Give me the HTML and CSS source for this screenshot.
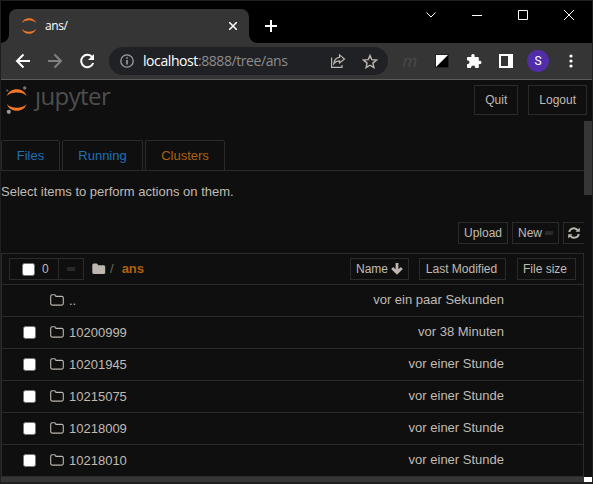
FILE: index.html
```html
<!DOCTYPE html>
<html lang="de">
<head>
<meta charset="utf-8">
<title>ans/</title>
<link rel="stylesheet" href="styles.css">
</head>
<body>
<svg width="0" height="0" class="defs">
  <symbol id="folder" viewBox="0 0 14 12"><path d="M.7 2.200Q.7.700 2.200.700h2.300Q5.700.700 5.900 2.400h5.900q1.500 0 1.500 1.500v5.700q0 1.500-1.500 1.500H2.200Q.7 11.100.700 9.600z" fill="none" stroke="#bdb7af" stroke-width="1.1"/></symbol>
</svg>
<div class="window">
  <div class="tabstrip">
    <div class="tab">
      <svg class="favicon" width="16" height="16" viewBox="0 0 16 16" fill="#f37726"><path d="M.8 5.200C2 2 4.700.2 8 .2s6 1.800 7.200 5C13.500 3.200 11 2.200 8 2.200S2.500 3.200.8 5.200zM.8 10.800C2 14 4.700 15.800 8 15.800s6-1.800 7.200-5C13.500 12.800 11 13.800 8 13.800S2.500 12.800.8 10.800z"/></svg>
      <span class="tab-title">ans/</span>
      <svg width="8" height="8" viewBox="0 0 8 8" stroke="#fff" stroke-width="1.5"><path d="M0 0l8 8M8 0L0 8"/></svg>
    </div>
    <svg class="plus" width="12" height="12" viewBox="0 0 12 12" stroke="#fff" stroke-width="2"><path d="M6 0v12M0 6h12"/></svg>
    <div class="controls">
      <svg width="12" height="12" viewBox="0 0 12 12"><path d="M1.500 3.500l4.500 4.500 4.500-4.500"/></svg>
      <svg width="12" height="12" viewBox="0 0 12 12"><path d="M1 6.500h10"/></svg>
      <svg width="12" height="12" viewBox="0 0 12 12"><path d="M1.500 1.500h9v9h-9z"/></svg>
      <svg width="12" height="12" viewBox="0 0 12 12"><path d="M1 1l10 10M11 1L1 11"/></svg>
    </div>
  </div>
  <div class="toolbar">
    <div class="nav">
      <svg width="16" height="16" viewBox="0 0 16 16" fill="none" stroke="#fff" stroke-width="2"><path d="M15 8H2.500M8.500 1.500L2 8l6.500 6.500"/></svg>
      <svg width="16" height="16" viewBox="0 0 16 16" fill="none" stroke="#808080" stroke-width="2"><path d="M1 8h12.500M7.500 1.500L14 8l-6.500 6.500"/></svg>
      <svg width="16" height="16" viewBox="0 0 16 16"><path d="M13.300 4.200A6.200 6.200 0 1 0 14.200 10" fill="none" stroke="#fff" stroke-width="2"/><path d="M15 1v6H9z" fill="#fff"/></svg>
    </div>
    <div class="omnibox">
      <svg width="14" height="14" viewBox="0 0 14 14" fill="none" stroke="#9aa0a6" stroke-width="1.300"><circle cx="7" cy="7" r="6.200"/><path d="M7 6v4.500M7 3.300v1.500" stroke-width="1.600"/></svg>
      <span class="url"><b>localhost</b>:8888/tree/ans</span>
      <svg width="16" height="14" viewBox="0 0 16 14" fill="none" stroke="#bdb7af" stroke-width="1.200"><path d="M1.600 3.500v9.900H12V11M9.500.9L14.500 5 9.500 9V6.800Q6 6.700 3.800 9.600 4.500 4 9.500 3.300z"/></svg>
      <svg class="star" width="16" height="15" viewBox="0 0 16 15" fill="none" stroke="#bdb7af" stroke-width="1.400"><path d="M8 1.500l1.800 4.200 4.600.4-3.500 3 1 4.500L8 11.200l-3.900 2.400 1-4.500-3.500-3 4.600-.4z"/></svg>
    </div>
    <div class="extensions">
      <span class="ext-m">m</span>
      <svg width="14" height="14" viewBox="0 0 14 14"><path d="M.5.5h13v13H.5z" fill="#000" stroke="#222"/><path d="M1 1h12L1 13z" fill="#fff"/></svg>
      <svg width="16" height="16" viewBox="0 0 16 16" fill="#fff"><path d="M2 4h3.500C4.800 2.500 5.500 1 7 1s2.200 1.500 1.500 3H12q.8 0 .8.800V8c1.500-.5 2.700.3 2.700 1.500s-1.200 2-2.700 1.500v3.200q0 .8-.8.800H9.300c0-1.500-.8-2.500-2.100-2.500S5 13.500 5 15H2q-1 0-1-.8v-3C2.500 11.200 3.500 10.500 3.500 9.200S2.500 7.200 1 7.200V4.800Q1 4 2 4z"/></svg>
      <svg width="14" height="14" viewBox="0 0 14 14"><path d="M0 0h14v14H0z" fill="#fff"/><path d="M2 2h7v10H2z" fill="#353535"/></svg>
      <span class="avatar">S</span>
      <svg class="kebab" width="4" height="14" viewBox="0 0 4 14" fill="#fff"><circle cx="2" cy="2" r="1.600"/><circle cx="2" cy="7" r="1.600"/><circle cx="2" cy="12" r="1.600"/></svg>
    </div>
  </div>
  <header class="header">
    <svg class="logo" width="32" height="32" viewBox="0 0 32 32">
      <g fill="#f37726"><path d="M6.800 13C8.500 8.500 12 6.200 16.800 6.200S25 8.500 26.600 13C24.500 10.500 21 9.500 16.800 9.500S9 10.500 6.800 13zM6.800 21C8.500 25.500 12 27.800 16.800 27.800S25 25.500 26.600 21C24.500 23.500 21 24.800 16.800 24.800S9 23.500 6.800 21z"/></g>
      <circle cx="24.700" cy="5" r="1.700" fill="#757575"/><circle cx="7.300" cy="7.500" r="1.100" fill="#686868"/><circle cx="8.800" cy="28.800" r="2.100" fill="#989898"/>
    </svg>
    <span class="wordmark">ȷupyter</span>
    <div class="actions"><span class="btn big">Quit</span><span class="btn big">Logout</span></div>
  </header>
  <main class="viewport">
    <div class="content">
      <nav class="tabs"><a class="files">Files</a><a class="running">Running</a><a class="clusters">Clusters</a></nav>
      <p class="hint">Select items to perform actions on them.</p>
      <div class="tools">
        <span class="btn upload">Upload</span>
        <span class="btn new">New<i class="dash"></i></span>
        <span class="btn refresh"><svg width="12" height="12" viewBox="0 0 12 12" fill="none" stroke="#bdb7af" stroke-width="1.900"><path d="M1.200 5A4.700 4.700 0 0 1 9.700 3.300M10.800 7A4.700 4.700 0 0 1 2.300 8.700"/><path d="M11.800.5v4.300H7.500zM.2 11.500V7.200h4.300z" fill="#bdb7af" stroke="none"/></svg></span>
      </div>
      <div class="list">
        <div class="row head">
          <div class="select"><span class="count"><i class="check"></i>0</span><span class="drop"><i class="dash"></i></span></div>
          <svg class="home" width="14" height="12" viewBox="0 0 14 12" fill="#bdb7af"><path d="M.3 2Q.3.500 1.800.5h2.700Q6 .5 6 2.200h5.700q1.500 0 1.500 1.500V9.500Q13.200 11 11.700 11H1.800Q.3 11 .3 9.500z"/></svg>
          <span class="slash">/</span><b class="crumb">ans</b>
          <div class="sorts">
            <span class="btn name">Name<svg width="12" height="12" viewBox="0 0 12 12" fill="none" stroke="#bdb7af" stroke-width="2.800"><path d="M6 0v10M1.200 5L6 9.800 10.800 5"/></svg></span>
            <span class="btn modified">Last Modified</span>
            <span class="btn size">File size</span>
          </div>
        </div>
        <div class="row"><i class="check none"></i><svg class="folder"><use href="#folder"/></svg><span>..</span><time>vor ein paar Sekunden</time></div>
        <div class="row"><i class="check"></i><svg class="folder"><use href="#folder"/></svg><span>10200999</span><time>vor 38 Minuten</time></div>
        <div class="row"><i class="check"></i><svg class="folder"><use href="#folder"/></svg><span>10201945</span><time>vor einer Stunde</time></div>
        <div class="row"><i class="check"></i><svg class="folder"><use href="#folder"/></svg><span>10215075</span><time>vor einer Stunde</time></div>
        <div class="row"><i class="check"></i><svg class="folder"><use href="#folder"/></svg><span>10218009</span><time>vor einer Stunde</time></div>
        <div class="row"><i class="check"></i><svg class="folder"><use href="#folder"/></svg><span>10218010</span><time>vor einer Stunde</time></div>
      </div>
    </div>
    <div class="vbar"><div class="thumb"></div></div>
  </main>
  <div class="hbar"><div class="track"></div><div class="corner"></div></div>
</div>
</body>
</html>
```

FILE: styles.css
```css
* { box-sizing: border-box; }
body { margin: 0; background: #0f0f0f; overflow: hidden; }
svg { display: block; flex: none; }
.defs { position: absolute; }
.window {
  width: 593px; height: 484px; display: flex; flex-direction: column;
  border: 1px solid #202020; border-bottom-width: 2px; background: #0f0f0f;
  font: 13px/18px "Liberation Sans", Arial, sans-serif; color: #c0bbb4;
}

.tabstrip { height: 42px; flex: none; display: flex; background: #000; padding-left: 8px; }
.tab {
  position: relative; width: 240px; height: 34px; margin-top: 8px; display: flex; align-items: center;
  padding: 0 12px 0 12px; background: #353535; border-radius: 8px 8px 0 0;
}
.tab::before, .tab::after { content: ""; position: absolute; bottom: 0; width: 8px; height: 8px; }
.tab::before { left: -8px; background: radial-gradient(circle at 0 0, #000 7.500px, #353535 8px); }
.tab::after { right: -8px; background: radial-gradient(circle at 100% 0, #000 7.500px, #353535 8px); }
.tab-title { flex: 1; margin-left: 8px; font: 12px/16px "Open Sans", sans-serif; color: #fff; letter-spacing: -.4px; }
.plus { margin: 19px 0 0 16px; }
.controls { display: flex; gap: 34px; margin: 8px 17px 0 auto; fill: none; stroke: #fff; }

.toolbar { height: 37px; flex: none; display: flex; align-items: center; background: #353535; border-bottom: 1px solid #5c5c5c; padding: 0 19px 0 14px; }
.nav { display: flex; gap: 16px; }
.omnibox { width: 279px; height: 28px; margin-left: 14px; padding: 0 10px 0 11px; display: flex; align-items: center; border-radius: 14px; background: #202124; }
.url { flex: 1; margin-left: 9px; font: 14px/20px "Open Sans", sans-serif; letter-spacing: -.42px; color: #8c8c8c; white-space: nowrap; }
.url b { font-weight: 400; color: #fff; }
.star { margin-left: 16px; }
.extensions { flex: 1; display: grid; grid-template-columns: repeat(6, 32px); align-items: center; justify-items: center; margin: 0 -14px 0 6px; }
.ext-m { font: italic 17px/20px "Open Sans", sans-serif; color: #4a4a4a; }
.kebab { margin-left: 1px; }
.avatar { width: 22px; height: 22px; border-radius: 50%; background: #512da8; color: #fff; font: 12px/22px Roboto, sans-serif; text-align: center; }

.header { height: 41px; flex: none; display: flex; }
.logo { margin: 3px 0 0 -1px; }
.wordmark { margin: -1px 0 0 3px; font: 24px/34px "Open Sans", sans-serif; letter-spacing: -.6px; color: #4e4e4e; }
.actions { display: flex; gap: 10px; margin-left: auto; padding: 5px 5px 0 0; }
.btn { display: flex; align-items: center; justify-content: center; height: 22px; border: 1px solid #2b2b2b; font-size: 12px; line-height: 18px; white-space: nowrap; }
.btn.big { height: 30px; padding: 0 10px; }

.viewport { height: 356px; flex: none; display: flex; }
.content { width: 583px; padding-top: 19px; }
.tabs { display: flex; gap: 2px; height: 31px; border-bottom: 1px solid #2b2b2b; }
.tabs a { height: 31px; border: 1px solid #2b2b2b; border-radius: 2px 2px 0 0; line-height: 30px; text-align: center; color: #1e70b8; }
.files { width: 59px; }
.running { width: 81px; }
.tabs .clusters { width: 80px; color: #b0620d; }
.hint { margin: 12px 0 21px; line-height: 18px; }
.tools { display: flex; gap: 4px; justify-content: flex-end; }
.upload { width: 50px; }
.new { width: 47px; gap: 3px; }
.refresh { width: 21px; border-right: 0; }
.dash { width: 8px; height: 4px; background: #292929; }

.list { margin-top: 9px; border: 1px solid #2b2b2b; border-bottom: 0; }
.row { height: 32px; display: flex; align-items: center; padding: 0 79px 1px 21px; border-bottom: 1px solid #2b2b2b; }
.row > span { margin-left: 5px; padding-top: 2px; }
.row time { margin-left: auto; }
.row.head { height: 31px; padding: 0 7px 0 7px; }
.check { width: 13px; height: 13px; flex: none; background: #fff; border: 1px solid #767676; border-radius: 2.500px; }
.check.none { visibility: hidden; }
.folder { width: 14px; height: 12px; margin-left: 14px; }
.select { width: 75px; height: 22px; display: flex; border: 1px solid #2b2b2b; font-size: 12px; }
.count { width: 49px; display: flex; align-items: center; gap: 7px; padding-left: 12px; border-right: 1px solid #2b2b2b; }
.drop { flex: 1; display: flex; align-items: center; justify-content: center; }
.home { margin-left: 8px; }
.row .slash { margin-left: 4px; padding: 0; color: #6b6559; }
.crumb { margin-left: 8px; color: #b0620d; }
.sorts { display: flex; margin-left: auto; }
.name { width: 59px; gap: 3px; }
.modified { width: 87px; margin-left: 10px; padding-right: 2px; }
.size { width: 59px; margin-left: 11px; padding-right: 3px; }
.vbar { width: 8px; }
.thumb { height: 74px; background: #363636; }

.hbar { height: 5px; display: flex; }
.track { width: 583px; background: #363636; }
.corner { width: 8px; background: #fff; }
```
